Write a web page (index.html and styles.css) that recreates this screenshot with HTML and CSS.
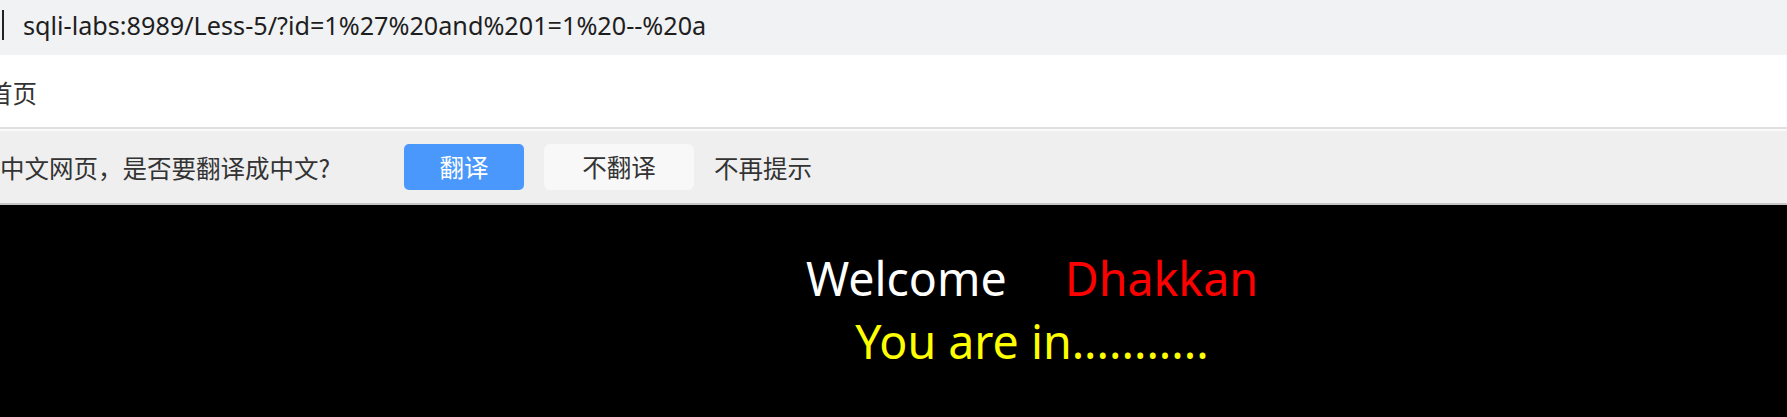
FILE: index.html
```html
<!DOCTYPE html>
<html lang="zh-CN">
<head>
<meta charset="utf-8">
<title>Less-5</title>
<link rel="stylesheet" href="styles.css">
</head>
<body>
  <div class="urlbar">
    <span class="caret"></span>
    <span class="url">sqli-labs:8989/Less-5/?id=1%27%20and%201=1%20--%20a</span>
  </div>
  <div class="tabrow">
    <span class="tabtitle">首页</span>
  </div>
  <div class="sep"></div>
  <div class="transbar">
    <span class="prompt">中文网页，是否要翻译成中文?</span>
    <button class="btn btn-primary">翻译</button>
    <button class="btn btn-plain">不翻译</button>
    <span class="never">不再提示</span>
  </div>
  <div class="content">
    <div class="line1">
      <span class="welcome">Welcome</span>
      <span class="name">Dhakkan</span>
    </div>
    <div class="line2">You are in...........</div>
  </div>
</body>
</html>
```
FILE: styles.css
```css
html, body {
  margin: 0;
  padding: 0;
}
body {
  width: 1787px;
  height: 417px;
  overflow: hidden;
  background: #000;
  font-family: "Noto Sans", "Noto Sans CJK SC", sans-serif;
}
.urlbar {
  height: 55px;
  background: #f1f2f4;
  display: flex;
  align-items: center;
}
.caret {
  width: 2px;
  height: 30px;
  background: #222;
  margin-left: 2px;
  margin-top: -6px;
}
.url {
  margin-left: 19px;
  margin-top: -6px;
  font-size: 25.2px;
  color: #1e1e1e;
  white-space: nowrap;
}
.tabrow {
  height: 72px;
  background: #fff;
  display: flex;
  align-items: center;
  border-bottom: 2px solid #e0e0e0;
  box-sizing: content-box;
}
.tabtitle {
  margin-left: -12px;
  margin-top: 2px;
  font-family: "Noto Sans CJK SC", sans-serif;
  font-size: 24.5px;
  color: #333;
}
.sep {
  height: 2px;
  background: #fafafa;
}
.transbar {
  height: 72px;
  background: #efefef;
  border-bottom: 2px solid #c6c6c6;
  display: flex;
  align-items: center;
  font-family: "Noto Sans CJK SC", sans-serif;
  font-size: 24.5px;
  color: #333;
}
.prompt {
  flex: none;
  width: 404px;
  margin-left: 0;
  white-space: nowrap;
}
.btn {
  flex: none;
  height: 46px;
  border: none;
  padding: 0;
  font-family: "Noto Sans CJK SC", sans-serif;
  font-size: 24.5px;
  line-height: 46px;
  margin-right: 20px;
}
.btn-primary {
  width: 120px;
  background: #4a98fb;
  color: #fff;
  border-radius: 5px;
}
.btn-plain {
  width: 150px;
  background: #f8f8f8;
  color: #333;
  border-radius: 6px;
}
.never {
  white-space: nowrap;
}
.content {
  height: 212px;
  background: #000;
  padding-left: 277px;
  padding-top: 42px;
  box-sizing: border-box;
  display: flex;
  flex-direction: column;
  align-items: center;
  font-family: "Noto Sans", sans-serif;
  font-size: 46.5px;
  line-height: 63px;
}
.line1 {
  display: flex;
  gap: 58px;
}
.welcome {
  color: #fff;
}
.name {
  color: #ff0000;
}
.line2 {
  color: #ffff00;
}
```
